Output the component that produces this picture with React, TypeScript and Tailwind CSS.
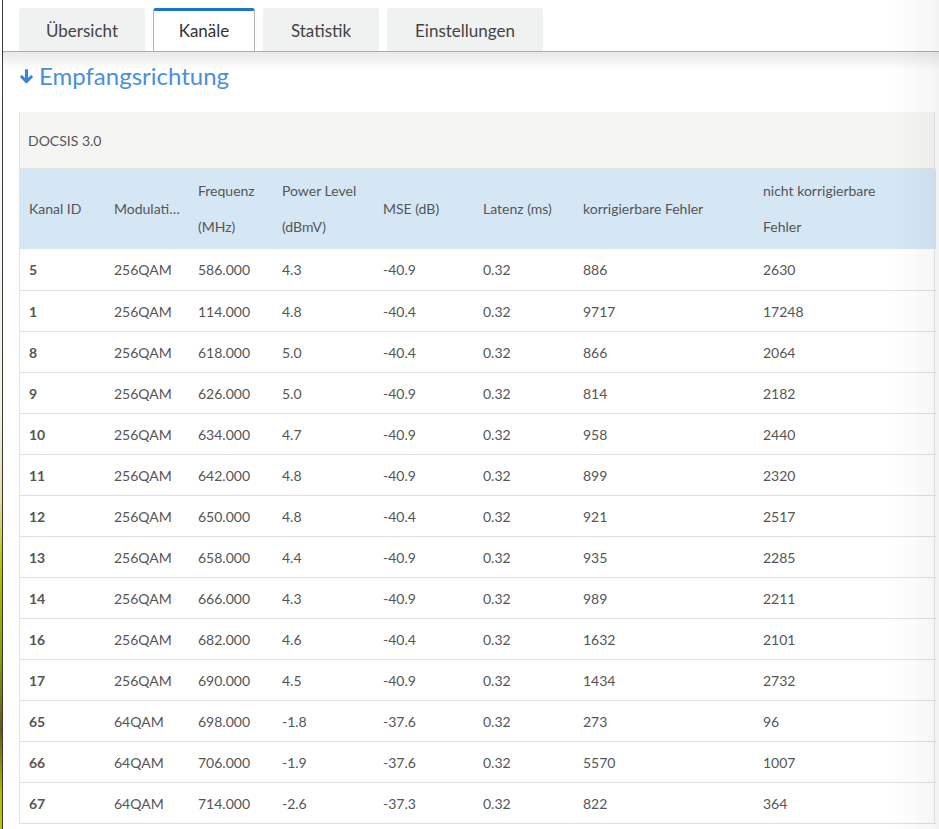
const tabs = [
  { label: 'Übersicht', w: 'w-[126px]' },
  { label: 'Kanäle', w: 'w-[102px]', active: true },
  { label: 'Statistik', w: 'w-[116px]' },
  { label: 'Einstellungen', w: 'w-[156px]' },
]

type Row = [string, string, string, string, string, string, string, string]

const rows: Row[] = [
  ['5', '256QAM', '586.000', '4.3', '-40.9', '0.32', '886', '2630'],
  ['1', '256QAM', '114.000', '4.8', '-40.4', '0.32', '9717', '17248'],
  ['8', '256QAM', '618.000', '5.0', '-40.4', '0.32', '866', '2064'],
  ['9', '256QAM', '626.000', '5.0', '-40.9', '0.32', '814', '2182'],
  ['10', '256QAM', '634.000', '4.7', '-40.9', '0.32', '958', '2440'],
  ['11', '256QAM', '642.000', '4.8', '-40.9', '0.32', '899', '2320'],
  ['12', '256QAM', '650.000', '4.8', '-40.4', '0.32', '921', '2517'],
  ['13', '256QAM', '658.000', '4.4', '-40.9', '0.32', '935', '2285'],
  ['14', '256QAM', '666.000', '4.3', '-40.9', '0.32', '989', '2211'],
  ['16', '256QAM', '682.000', '4.6', '-40.4', '0.32', '1632', '2101'],
  ['17', '256QAM', '690.000', '4.5', '-40.9', '0.32', '1434', '2732'],
  ['65', '64QAM', '698.000', '-1.8', '-37.6', '0.32', '273', '96'],
  ['66', '64QAM', '706.000', '-1.9', '-37.6', '0.32', '5570', '1007'],
  ['67', '64QAM', '714.000', '-2.6', '-37.3', '0.32', '822', '364'],
]

const cols = ['w-[85px]', 'w-[84px]', 'w-[84px]', 'w-[101px]', 'w-[100px]', 'w-[100px]', 'w-[180px]', 'w-[182px]']

// solid down arrow, like the icon font one
const DownArrow = () => (
  <svg viewBox="0 0 14 16" className="h-[15px] w-[13px] fill-[#3a83d6]">
    <path d="M5.3 1.2C5.3.6 5.8.2 6.4.2h1.2c.6 0 1.1.4 1.1 1v8.3l2.6-2.6c.4-.4 1.1-.4 1.6 0l.7.7c.4.4.4 1.1 0 1.6L7.8 15c-.4.4-1.1.4-1.6 0L.4 9.2c-.4-.4-.4-1.1 0-1.6l.7-.7c.4-.4 1.1-.4 1.6 0l2.6 2.6z" />
  </svg>
)

export default function App() {
  return (
    <div className="relative flex h-[829px] overflow-hidden bg-white font-['Lato','Liberation_Sans',sans-serif] text-[#555]">
      <div className="w-[2px] shrink-0 bg-[linear-gradient(to_bottom,#ffffff_0%,#f4f0e4_50%,#e6dca8_60%,#b4c400_68%,#8a9a08_80%,#5e5a18_88%,#b0c000_96%,#b8c800_100%)]" />
      <div className="w-px shrink-0 bg-[#3a3a3a]" />

      <div className="min-w-0 flex-1">
        {/* tabs */}
        <div className="flex gap-2 border-b border-[#acacac] pl-4 pt-2">
          {tabs.map(t =>
            t.active ? (
              <div
                key={t.label}
                className={`${t.w} -mb-px flex h-[43px] items-center justify-center rounded-t-[3px] border-x border-t-[3px] border-x-[#b5b5b5] border-t-[#1a74d0] bg-white text-[17px] text-[#333]`}
              >
                {t.label}
              </div>
            ) : (
              <div
                key={t.label}
                className={`${t.w} flex h-[43px] items-center justify-center rounded-t-[3px] bg-[#f0f1f1] pt-[3px] text-[17px] text-[#444]`}
              >
                {t.label}
              </div>
            )
          )}
        </div>

        {/* heading */}
        <div className="h-[60px] bg-[linear-gradient(to_bottom,#e9e9e9_0px,#ffffff_18px)] pl-[17px] pt-[10px]">
          <h2 className="flex items-center gap-[6px] text-[24px] leading-[28px] text-[#4a8fdc]">
            <DownArrow />
            Empfangsrichtung
          </h2>
        </div>

        {/* table */}
        <div className="ml-4 w-[916px] border-x border-[#e2e2e2]">
          <div className="flex h-[57px] items-center border-b border-[#e4e4e4] bg-[#f5f5f4] px-[8px] pt-px text-[14px]">
            DOCSIS 3.0
          </div>
          <table className="w-full table-fixed border-collapse text-[14px]">
            <colgroup>
              {cols.map((c, i) => (
                <col key={i} className={c} />
              ))}
            </colgroup>
            <thead>
              <tr className="bg-[#d5e7f5] text-left">
                <th className="px-[9px] py-1 align-middle font-normal leading-[36px]">Kanal ID</th>
                <th className="overflow-hidden px-[9px] py-1 align-middle font-normal leading-[36px] text-ellipsis whitespace-nowrap">Modulation</th>
                <th className="px-[9px] py-1 align-middle font-normal leading-[36px]">Frequenz<br />(MHz)</th>
                <th className="px-[9px] py-1 align-middle font-normal leading-[36px]">Power Level<br />(dBmV)</th>
                <th className="px-[9px] py-1 align-middle font-normal leading-[36px]">MSE (dB)</th>
                <th className="px-[9px] py-1 align-middle font-normal leading-[36px]">Latenz (ms)</th>
                <th className="px-[9px] py-1 align-middle font-normal leading-[36px]">korrigierbare Fehler</th>
                <th className="px-[9px] py-1 align-middle font-normal leading-[36px]">nicht korrigierbare<br />Fehler</th>
              </tr>
            </thead>
            <tbody>
              {rows.map(r => (
                <tr key={r[0]} className="h-[41px] border-b border-[#e0e0e0]">
                  {r.map((v, i) => (
                    <td key={i} className={`px-[9px] pt-[2px] align-middle leading-[20px] ${i === 0 ? 'font-bold' : ''}`}>
                      {v}
                    </td>
                  ))}
                </tr>
              ))}
            </tbody>
          </table>
        </div>
      </div>

      <div className="pointer-events-none absolute inset-y-0 right-0 w-[48px] bg-[linear-gradient(to_right,rgba(0,0,0,0)_0%,rgba(0,0,0,0.035)_90%,rgba(0,0,0,0.05)_100%)]" />
    </div>
  )
}
